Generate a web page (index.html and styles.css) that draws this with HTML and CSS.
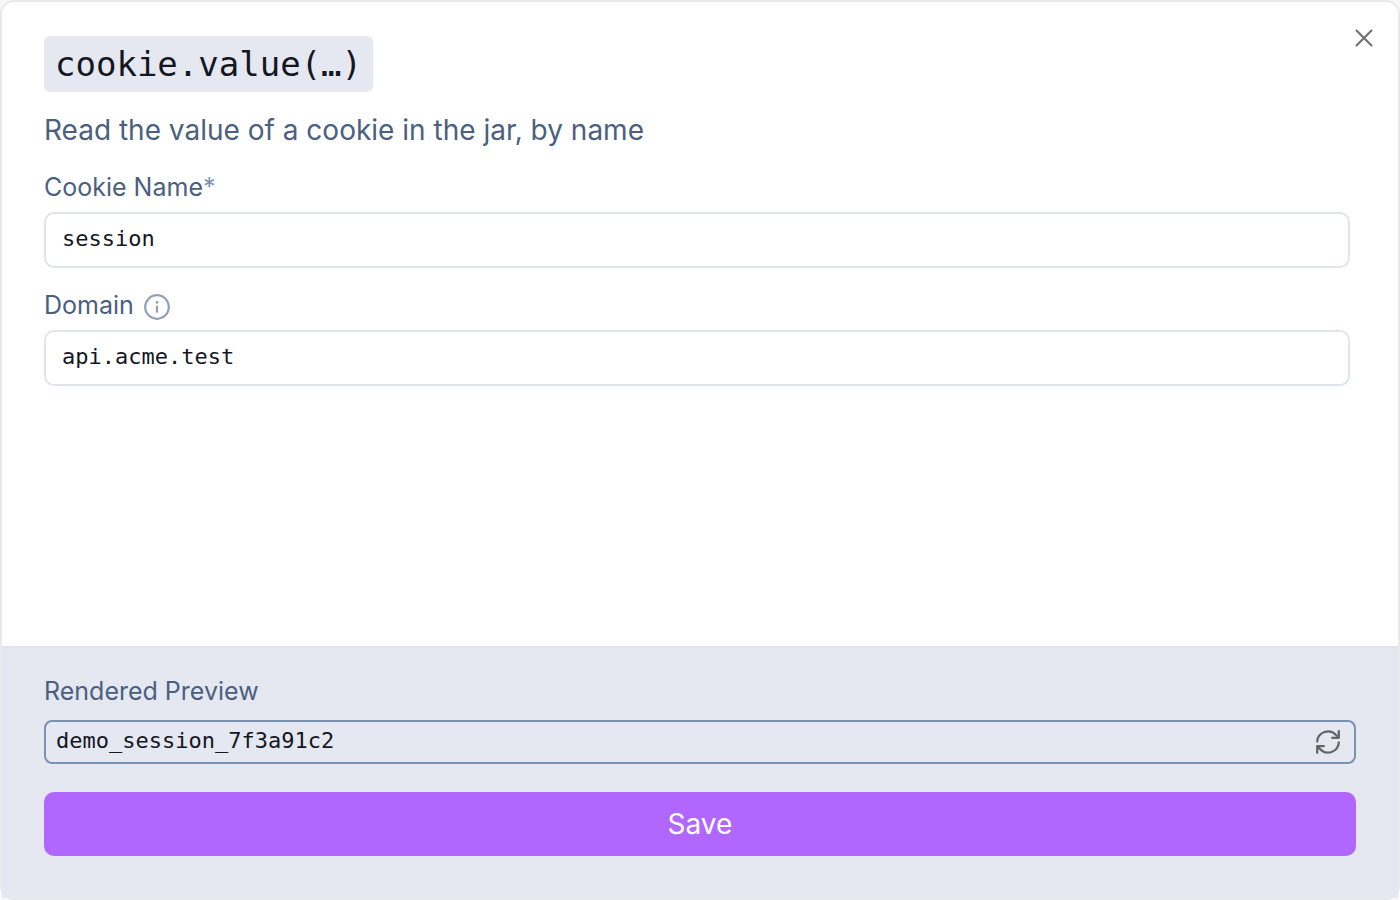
FILE: index.html
```
<!DOCTYPE html>
<html lang="en">
<head>
    <title>Edit Tag</title>
    <meta charset="UTF-8">
    <link rel="stylesheet" href="styles.css">
</head>
<body>
<form class="dialog">
    <button type="button" class="close" aria-label="Close">
        <svg width="18" height="18" viewBox="0 0 18 18" fill="none" stroke="currentColor" stroke-width="2.2">
            <path d="M1 1L17 17M17 1L1 17"/>
        </svg>
    </button>

    <div class="dialog-body">
        <h1 class="title"><code class="tag">cookie.value(…)</code></h1>
        <p class="description">Read the value of a cookie in the jar, by name</p>

        <div class="field">
            <label class="label" for="cookieName"><span>Cookie Name<span class="required">*</span></span></label>
            <input class="input" type="text" id="cookieName" value="session" required>
        </div>
        <div class="field">
            <label class="label" for="domain">Domain
                <svg class="info" width="26" height="26" viewBox="0 0 26 26" fill="none" stroke="currentColor" stroke-width="2.2" stroke-linecap="round">
                    <circle cx="13" cy="13" r="11.8"/>
                    <path d="M13 12.5V17.8"/>
                    <circle cx="13" cy="8.4" r="1.4" fill="currentColor" stroke="none"/>
                </svg>
            </label>
            <input class="input" type="text" id="domain" value="api.acme.test">
        </div>
    </div>

    <div class="dialog-footer">
        <label class="label" for="preview">Rendered Preview</label>
        <div class="preview">
            <output class="preview-value" id="preview">demo_session_7f3a91c2</output>
            <button type="button" class="refresh" aria-label="Refresh">
                <svg width="24" height="24" viewBox="0 0 24 24" fill="none" stroke="currentColor" stroke-width="2.3" stroke-linecap="round" stroke-linejoin="round">
                    <path d="M1.2 11.5A10.8 10.8 0 0 1 20 5L22.8 7.8M22.8 1.2V7.8H16.2"/>
                    <path d="M22.8 12.5A10.8 10.8 0 0 1 4 19L1.2 16.2M1.2 22.8V16.2H7.8"/>
                </svg>
            </button>
        </div>
        <button type="submit" class="save">Save</button>
    </div>
</form>
</body>
</html>
```
FILE: styles.css
```
* {
    box-sizing: border-box;
}

body {
    font-family: Inter, "Liberation Sans", sans-serif;
    margin: 0;
    background: #f7f7f7;
    color: #4b6080;
}

.dialog {
    position: relative;
    display: flex;
    flex-direction: column;
    min-height: 100vh;
    border: 2px solid #e9e9e9;
    border-radius: 14px;
    background: #fff;
}

button {
    padding: 0;
    border: none;
    background: none;
    font-family: inherit;
    cursor: pointer;
}

.close {
    position: absolute;
    top: 20px;
    right: 18px;
    display: flex;
    align-items: center;
    justify-content: center;
    width: 32px;
    height: 32px;
    color: #737373;
}

.dialog-body {
    flex: 1;
    padding: 34px 48px 34px 42px;
}

.title {
    display: flex;
    margin: 0 0 20px;
}

.tag {
    padding: 0 9px;
    border: 2px solid #e9e9e9;
    border-radius: 6px;
    background: #e5e8f1;
    color: #14171f;
    font-family: "DejaVu Sans Mono", monospace;
    font-size: 34px;
    font-weight: 400;
    line-height: 52px;
}

.description {
    margin: 0 0 20px;
    font-size: 28px;
    line-height: 36px;
}

.field {
    margin-bottom: 18px;
}

.label {
    display: flex;
    align-items: center;
    gap: 10px;
    margin-bottom: 6px;
    font-size: 25px;
    line-height: 38px;
}

.required {
    color: #7d93b3;
}

.info {
    margin-top: 4px;
    color: #93a0b8;
}

.input {
    display: block;
    width: 100%;
    height: 56px;
    padding: 0 16px 4px;
    border: 2px solid #e1e4ec;
    border-radius: 10px;
    background: #fff;
    color: #14171f;
    font-family: "DejaVu Sans Mono", monospace;
    font-size: 22px;
}

.dialog-footer {
    padding: 24px 42px 42px;
    border-top: 2px solid #dfe3ec;
    background: #e5e8f1;
}

.preview {
    display: flex;
    align-items: center;
    justify-content: space-between;
    height: 44px;
    margin: 10px 0 28px;
    padding: 0 10px;
    border: 2px solid #7a92b2;
    border-radius: 8px;
}

.preview-value {
    padding-bottom: 4px;
    color: #14171f;
    font-family: "DejaVu Sans Mono", monospace;
    font-size: 22px;
}

.refresh {
    display: flex;
    padding: 4px;
    color: #666;
}

.save {
    display: block;
    width: 100%;
    height: 64px;
    border-radius: 10px;
    background: #b066ff;
    color: #fff;
    font-size: 28px;
}
```
